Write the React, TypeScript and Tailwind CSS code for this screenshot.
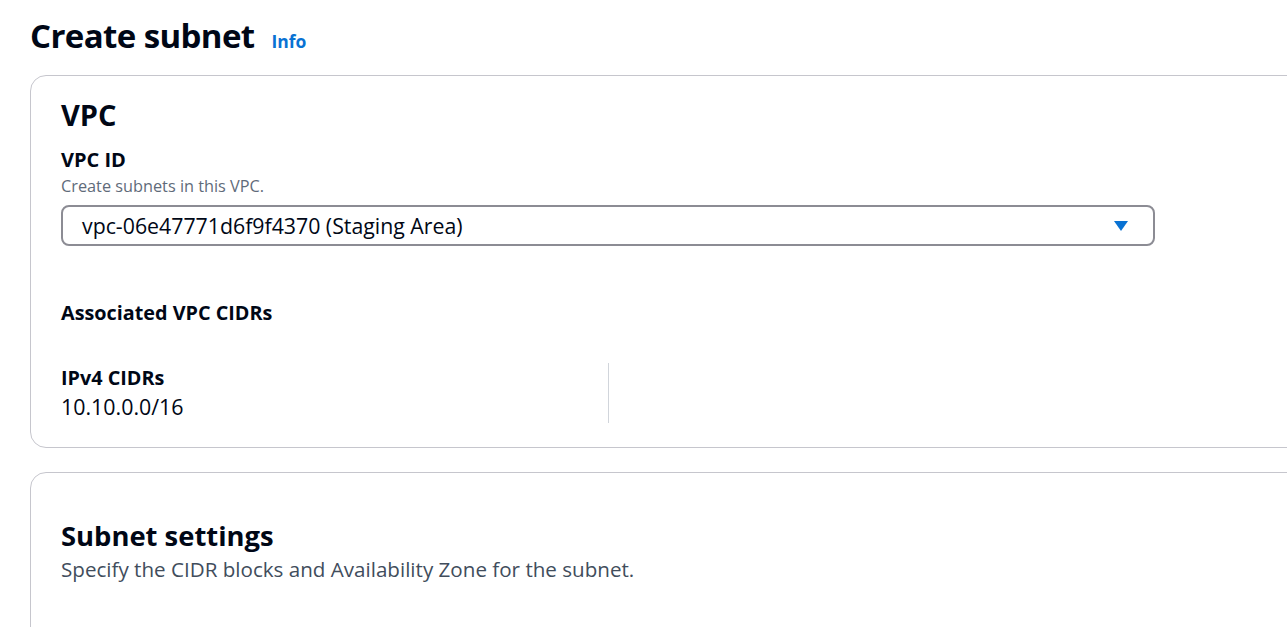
export default function App() {
  return (
    <div
      className="h-[627px] w-[1287px] overflow-hidden bg-white text-[#000716]"
      style={{ fontFamily: '"Open Sans", "Noto Sans", sans-serif' }}
    >
      <div className="pl-[30px] pt-[15px]">
        {/* Page header */}
        <div className="flex items-baseline gap-[17px]">
          <h1 className="text-[33px] font-bold leading-[42px] tracking-[-0.6px]">
            Create subnet
          </h1>
          <a className="text-[17.5px] font-bold text-[#0972d3]">Info</a>
        </div>

        {/* VPC card */}
        <section className="mt-[18px] h-[373px] w-[1300px] rounded-[16px] border border-[#c6c6cd] pl-[30px] pt-[20px]">
          <h2 className="text-[29px] font-bold leading-[38px]">VPC</h2>
          <div className="mt-[15px]">
            <div className="text-[20px] font-bold leading-[22px]">VPC ID</div>
            <div className="mt-[5px] text-[16.3px] leading-[20px] text-[#5f6b7a]">
              Create subnets in this VPC.
            </div>
            <div className="mt-[9px] flex h-[41px] w-[1094px] items-center justify-between rounded-[8px] border-2 border-[#8c8c94] pl-[19px] pr-[24px]">
              <span className="text-[21.3px]">vpc-06e47771d6f9f4370 (Staging Area)</span>
              <svg width="16" height="12" viewBox="0 0 16 12">
                <path d="M1 1h14L8 11z" fill="#0972d3" />
              </svg>
            </div>
          </div>

          <div className="mt-[55px] text-[19.8px] font-bold leading-[24px]">
            Associated VPC CIDRs
          </div>

          <div className="mt-[38px] flex">
            <div className="h-[60px] w-[548px] border-r border-[#d1d5db] pt-[3px]">
              <div className="text-[19.8px] font-bold leading-[24px]">IPv4 CIDRs</div>
              <div className="mt-[5px] text-[21.4px] leading-[24px]">10.10.0.0/16</div>
            </div>
          </div>
        </section>

        {/* Subnet settings card */}
        <section className="mt-[24px] h-[200px] w-[1300px] rounded-[16px] border border-[#c6c6cd] pl-[30px] pt-[45px]">
          <h2 className="text-[27.4px] font-bold leading-[36px]">Subnet settings</h2>
          <p className="mt-[3px] text-[20.6px] leading-[24px] text-[#414d5c]">
            Specify the CIDR blocks and Availability Zone for the subnet.
          </p>
        </section>
      </div>
    </div>
  );
}
